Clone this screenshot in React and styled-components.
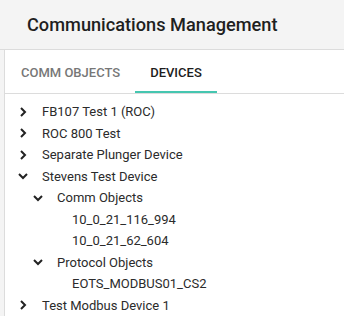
import React from 'react';
import styled, { createGlobalStyle } from 'styled-components';

const Global = createGlobalStyle`
  html, body {
    margin: 0;
    padding: 0;
    background: #f4f4f4;
    font-family: Roboto, "Liberation Sans", sans-serif;
  }
`;

const Page = styled.div`
  width: 344px;
  height: 316px;
  display: flex;
  flex-direction: column;
  overflow: hidden;
  background: #f4f4f4;
`;

const Header = styled.div`
  height: 49px;
  flex: none;
  display: flex;
  align-items: center;
  padding-left: 27px;
  padding-bottom: 1px;
  border-bottom: 1px solid #dcdcdc;
  font-size: 18.2px;
  font-weight: 500;
  color: #1f1f1f;
  box-sizing: border-box;
  height: 50px;
`;

const Body = styled.div`
  flex: 1;
  display: flex;
  padding-left: 4px;
  min-height: 0;
`;

const Panel = styled.div`
  flex: 1;
  background: #fff;
  border-left: 1px solid #dcdcdc;
  display: flex;
  flex-direction: column;
`;

const Tabs = styled.div`
  display: flex;
  height: 43px;
  border-bottom: 1px solid #dcdcdc;
  padding-left: 1px;
`;

const Tab = styled.div`
  display: flex;
  align-items: center;
  padding: 3px 15px 0;
  font-size: 13px;
  font-weight: 500;
  text-transform: uppercase;
  color: ${p => (p.active ? '#1d1d1d' : '#777')};
  border-bottom: 2px solid ${p => (p.active ? '#45c6b0' : 'transparent')};
`;

const Tree = styled.div`
  padding-top: 7px;
`;

const Row = styled.div`
  display: flex;
  align-items: center;
  height: 21.5px;
  padding-left: ${p => 11 + p.level * 15}px;
  font-size: 13px;
  color: #2b2b2b;
  white-space: nowrap;
`;

const Toggle = styled.span`
  width: 14px;
  height: 14px;
  flex: none;
  display: flex;
  align-items: center;
  justify-content: center;
`;

const Label = styled.span`
  margin-left: 12px;
`;

const Chevron = ({ open }) => (
  <svg width="12" height="12" viewBox="0 0 12 12">
    <polyline
      points={open ? '2,4 6,8 10,4' : '4,2 8,6 4,10'}
      fill="none"
      stroke="#222"
      strokeWidth="2"
    />
  </svg>
);

const items = [
  { level: 0, label: 'FB107 Test 1 (ROC)', toggle: 'closed' },
  { level: 0, label: 'ROC 800 Test', toggle: 'closed' },
  { level: 0, label: 'Separate Plunger Device', toggle: 'closed' },
  { level: 0, label: 'Stevens Test Device', toggle: 'open' },
  { level: 1, label: 'Comm Objects', toggle: 'open' },
  { level: 2, label: '10_0_21_116_994' },
  { level: 2, label: '10_0_21_62_604' },
  { level: 1, label: 'Protocol Objects', toggle: 'open' },
  { level: 2, label: 'EOTS_MODBUS01_CS2' },
  { level: 0, label: 'Test Modbus Device 1', toggle: 'closed' },
];

export default function App() {
  return (
    <Page>
      <Global />
      <Header>Communications Management</Header>
      <Body>
        <Panel>
          <Tabs>
            <Tab>Comm Objects</Tab>
            <Tab active>Devices</Tab>
          </Tabs>
          <Tree>
            {items.map((it, i) => (
              <Row key={i} level={it.level}>
                <Toggle>{it.toggle && <Chevron open={it.toggle === 'open'} />}</Toggle>
                <Label>{it.label}</Label>
              </Row>
            ))}
          </Tree>
        </Panel>
      </Body>
    </Page>
  );
}
